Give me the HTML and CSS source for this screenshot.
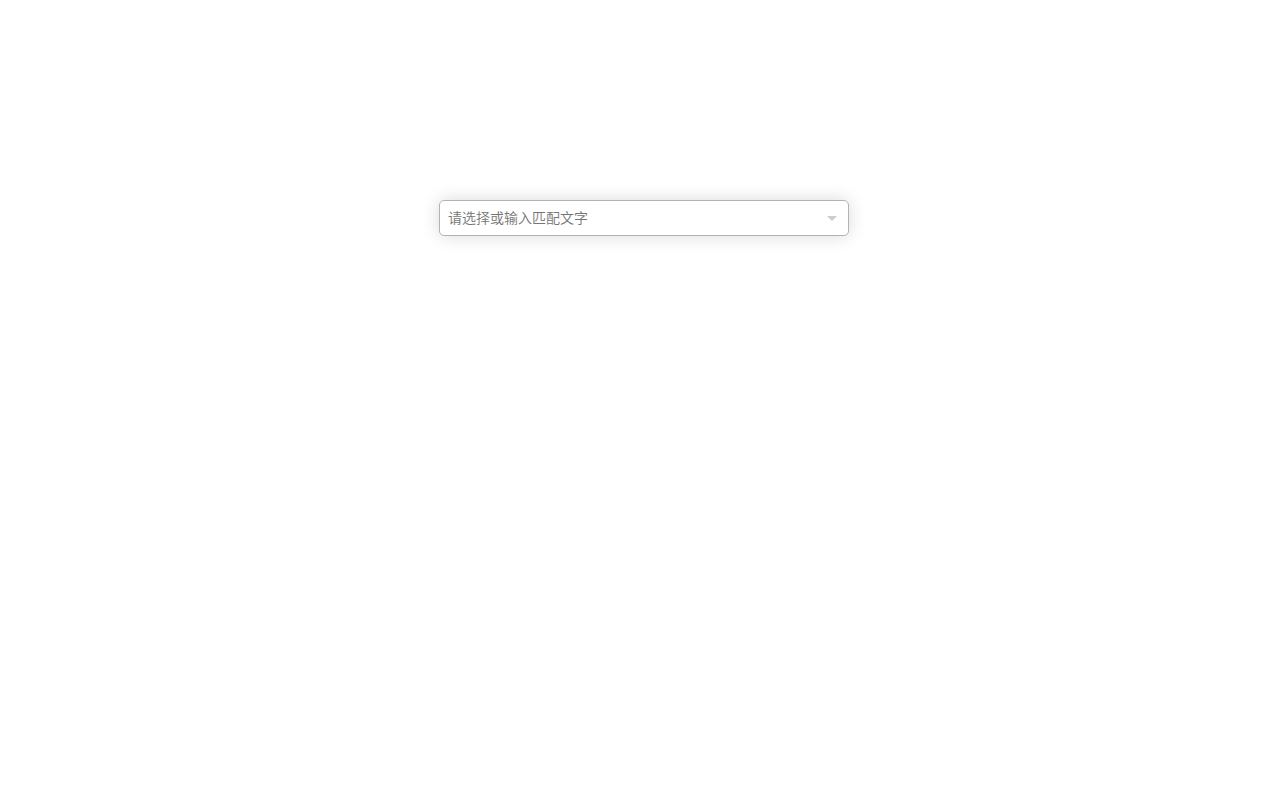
FILE: index.html
```html
<!DOCTYPE html>
<html lang="zh-CN">
<head>
  <meta charset="utf-8">
  <title>下拉选择</title>
  <link rel="stylesheet" href="styles.css">
</head>
<body>
  <div class="select-box">
    <input type="text" class="select-input" id="select-input" placeholder="请选择或输入匹配文字" aria-label="请选择或输入匹配文字" autocomplete="off">
    <button type="button" class="select-toggle" id="select-toggle" aria-label="展开">
      <span class="arrow"></span>
    </button>
  </div>

  <script>
    const selectInput = document.getElementById('select-input');
    const selectToggle = document.getElementById('select-toggle');

    selectToggle.addEventListener('click', () => {
      selectInput.focus();
    });
  </script>
</body>
</html>
```
FILE: styles.css
```css
body {
  box-sizing: border-box;
  min-height: 100vh;
  margin: 0;
  padding: 200px 0 0 8px;
  background-color: #fff;
  font-family: "Liberation Sans", "Noto Sans CJK SC", sans-serif;
  font-size: 14px;
}

.select-box {
  display: flex;
  align-items: center;
  box-sizing: border-box;
  width: 100%;
  max-width: 410px;
  height: 36px;
  margin: 0 auto;
  border: 1px solid #b3b3b3;
  border-radius: 5px;
  background-color: #fff;
  box-shadow: 0 0 18px rgba(0, 0, 0, 0.15);
}

.select-input {
  flex: 1;
  min-width: 0;
  height: 34px;
  box-sizing: border-box;
  padding: 0 8px;
  border: none;
  outline: none;
  background: none;
  font: inherit;
  font-weight: 350;
}

.select-input::placeholder {
  color: #757575;
}

.select-toggle {
  display: flex;
  align-items: center;
  height: 34px;
  padding: 0 11px;
  border: none;
  background: none;
  cursor: pointer;
}

/* down triangle */
.arrow {
  border-top: 5px solid #ccc;
  border-left: 5px solid transparent;
  border-right: 5px solid transparent;
}
```
